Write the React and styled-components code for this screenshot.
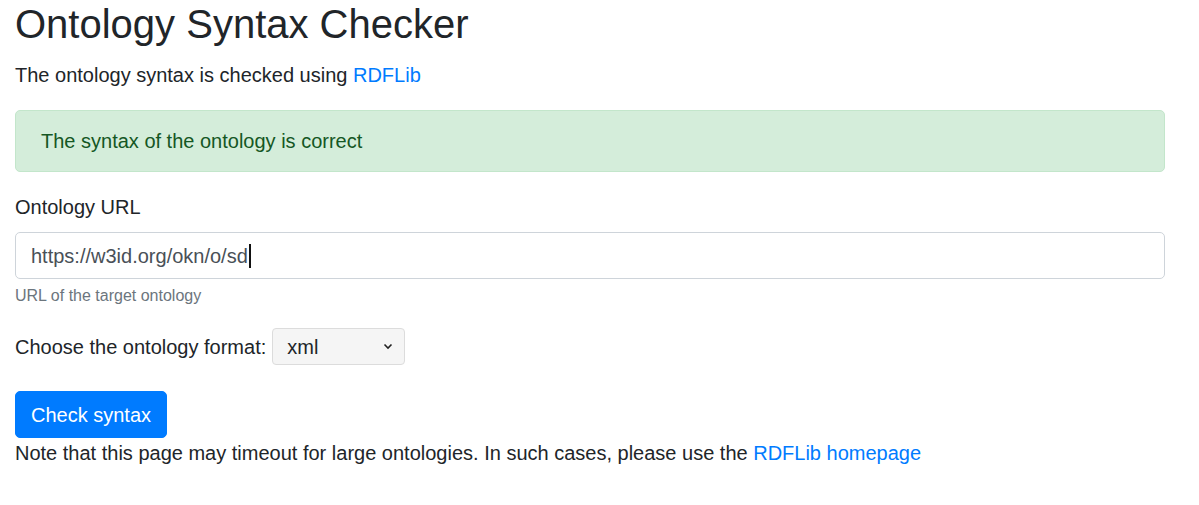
import React from "react";
import styled, { createGlobalStyle } from "styled-components";

const GlobalStyle = createGlobalStyle`
  html, body {
    margin: 0;
    padding: 0;
    background: #ffffff;
  }
  body {
    font-family: "Liberation Sans", Arial, Helvetica, sans-serif;
    font-size: 20px;
    line-height: 1.5;
    color: #212529;
  }
  * {
    box-sizing: border-box;
  }
`;

const Page = styled.div`
  width: 1150px;
  margin-left: 15px;
`;

const Title = styled.h1`
  margin: 0 0 12px;
  font-size: 40px;
  font-weight: 400;
  line-height: 1.2;
`;

const Text = styled.p`
  margin: 0 0 ${(p) => (p.$tight ? "0" : "20px")};
`;

const Link = styled.a`
  color: #007bff;
  text-decoration: none;
`;

const Alert = styled.div`
  padding: 15px 25px;
  margin-bottom: 20px;
  border: 1px solid #c3e6cb;
  border-radius: 5px;
  background: #d4edda;
  color: #155724;
`;

const FormGroup = styled.div`
  margin-bottom: 20px;
`;

const Label = styled.label`
  display: block;
  margin-bottom: 10px;
`;

const Field = styled.div`
  display: flex;
  align-items: center;
  height: 47px;
  padding: 0 15px;
  border: 1px solid #ced4da;
  border-radius: 5px;
  background: #fff;
  color: #495057;
`;

const Caret = styled.span`
  display: inline-block;
  width: 2px;
  height: 24px;
  margin-left: 1px;
  background: #111;
`;

const Help = styled.small`
  display: block;
  margin-top: 5px;
  font-size: 16px;
  line-height: 24px;
  color: #6c757d;
`;

const FormatRow = styled.div`
  display: flex;
  align-items: center;
  gap: 6px;
  height: 37px;
  margin-bottom: 26px;
`;

const SelectWrap = styled.div`
  position: relative;
  width: 133px;
  height: 37px;
`;

const Select = styled.select`
  appearance: none;
  width: 100%;
  height: 100%;
  padding: 0 30px 0 14px;
  border: 1px solid #dcdcdc;
  border-radius: 4px;
  background: #f5f5f5;
  color: #212529;
  font: inherit;
  font-size: 20px;
`;

const Chevron = styled.svg`
  position: absolute;
  right: 12px;
  top: 15px;
  pointer-events: none;
`;

const Button = styled.button`
  display: block;
  padding: 7.5px 15px;
  border: 1px solid #007bff;
  border-radius: 5px;
  background: #007bff;
  color: #fff;
  font: inherit;
  font-size: 20px;
  line-height: 30px;
  cursor: pointer;
`;

export default function App() {
  return (
    <>
      <GlobalStyle />
      <Page>
        <Title>Ontology Syntax Checker</Title>
        <Text>
          The ontology syntax is checked using <Link href="#">RDFLib</Link>
        </Text>
        <Alert>The syntax of the ontology is correct</Alert>
        <FormGroup>
          <Label>Ontology URL</Label>
          <Field>
            https://w3id.org/okn/o/sd
            <Caret />
          </Field>
          <Help>URL of the target ontology</Help>
        </FormGroup>
        <FormatRow>
          <span>Choose the ontology format:</span>
          <SelectWrap>
            <Select defaultValue="xml">
              <option value="xml">xml</option>
              <option value="turtle">turtle</option>
              <option value="n3">n3</option>
              <option value="nt">nt</option>
            </Select>
            <Chevron width="10" height="7" viewBox="0 0 10 7">
              <path
                d="M1.5 1.5 L5 5 L8.5 1.5"
                fill="none"
                stroke="#222"
                strokeWidth="1.6"
              />
            </Chevron>
          </SelectWrap>
        </FormatRow>
        <Button>Check syntax</Button>
        <Text $tight>
          Note that this page may timeout for large ontologies. In such cases,
          please use the <Link href="#">RDFLib homepage</Link>
        </Text>
      </Page>
    </>
  );
}
